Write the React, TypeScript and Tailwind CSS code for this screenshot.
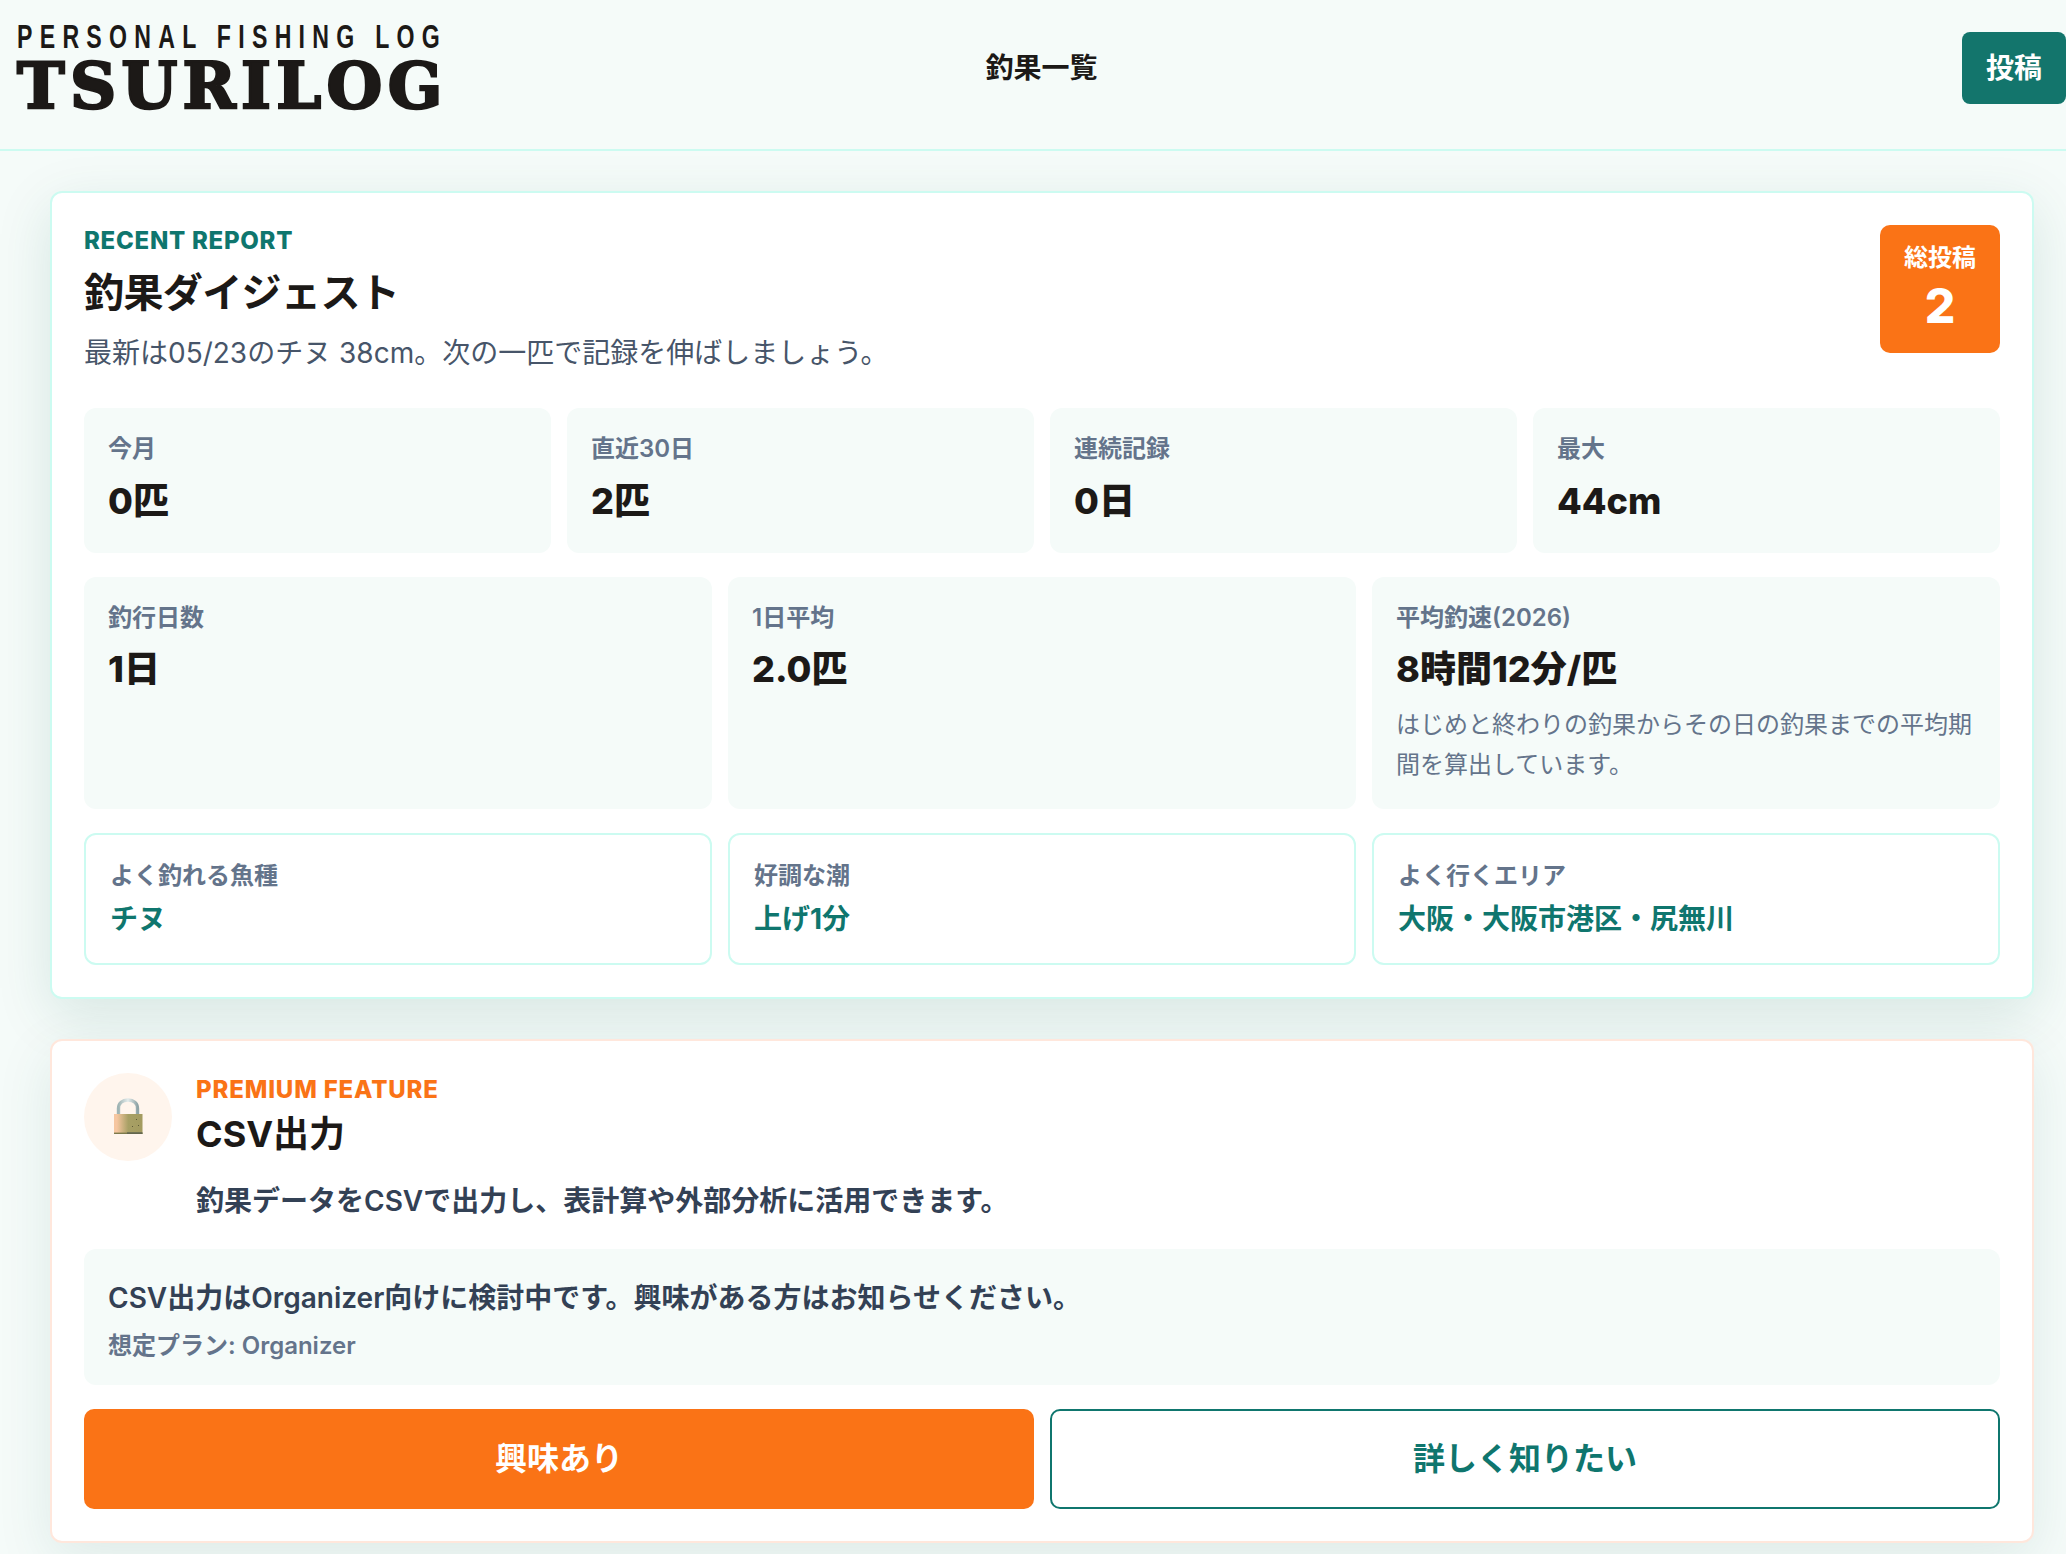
import React from 'react';

const sans = "font-['Inter','Noto_Sans_CJK_JP',sans-serif]";

function StatCard({ label, value, hint, tall }: { label: string; value: string; hint?: string; tall?: boolean }) {
    return (
        <div className={`rounded-[12px] bg-[#f5fbf9] px-6 pt-[25px] ${tall ? 'pb-[24px]' : 'pb-[30px]'}`}>
            <div className="text-[24px] leading-[32px] font-semibold text-[#64748b]">{label}</div>
            <div className={`${tall ? 'mt-[13px]' : 'mt-[14px]'} text-[36px] leading-[44px] font-extrabold text-[#1c1917]`}>{value}</div>
            {hint && <p className="mt-[14px] text-[24px] leading-[40px] text-[#64748b]">{hint}</p>}
        </div>
    );
}

function TrendCard({ label, value }: { label: string; value: string }) {
    return (
        <div className="rounded-[12px] border-2 border-[#ccfbf1] bg-white px-6 pt-[25px] pb-6">
            <div className="text-[24px] leading-[32px] font-semibold text-[#64748b]">{label}</div>
            <div className="mt-[7px] text-[28px] leading-[40px] font-bold text-[#0f766e]">{value}</div>
        </div>
    );
}

function LockIcon() {
    return (
        <svg width="32" height="40" viewBox="0 0 32 40" aria-hidden="true">
            <defs>
                <linearGradient id="lockBody" x1="0" y1="0" x2="1" y2="0">
                    <stop offset="0.1" stopColor="#f6c6a0" />
                    <stop offset="0.5" stopColor="#a8a065" />
                    <stop offset="1" stopColor="#a39b60" />
                </linearGradient>
                <linearGradient id="lockShackle" x1="0" y1="0" x2="1" y2="0">
                    <stop offset="0" stopColor="#9fb4b4" />
                    <stop offset="0.5" stopColor="#e4ecec" />
                    <stop offset="1" stopColor="#8ea3a6" />
                </linearGradient>
            </defs>
            <path d="M6.5 18 V11.5 C6.5 6 10.5 3 16 3 C21.5 3 25.5 6 25.5 11.5 V18" fill="none" stroke="url(#lockShackle)" strokeWidth="3.4" />
            <rect x="2" y="17" width="28.5" height="20" fill="url(#lockBody)" />
            <rect x="2" y="35.6" width="28.5" height="1.4" fill="#7d7a4c" />
            <rect x="15" y="35.6" width="15.5" height="0.8" fill="#3d4a52" />
            <rect x="24" y="22" width="1" height="1" fill="#5e5a38" />
            <rect x="20" y="29" width="1" height="1" fill="#5e5a38" />
            <rect x="26" y="28" width="1" height="1" fill="#5e5a38" />
        </svg>
    );
}

export default function App() {
    return (
        <div className={`${sans} min-h-[1554px] w-[2066px] overflow-hidden bg-[#f5fbf9] text-[#1c1917]`}>
            <header className="flex h-[151px] items-start border-b-2 border-[#ccfbf1] bg-[#f5fbf9] pl-[17px]">
                <div className="flex flex-1 justify-start">
                    <div className="w-[428px]">
                        <div className="mt-[24px] origin-left scale-x-[0.7] font-['Liberation_Sans',sans-serif] text-[33px] leading-[26px] font-bold tracking-[10.4px] whitespace-nowrap text-[#1c1917]">
                            PERSONAL FISHING LOG
                        </div>
                        <div className="mt-[8px] font-['DejaVu_Serif',serif] text-[64px] leading-[56px] font-bold tracking-[5.3px] whitespace-nowrap text-[#1c1917] [-webkit-text-stroke:2.5px_#1c1917]">
                            TSURILOG
                        </div>
                    </div>
                </div>
                <nav className="mt-[48px] text-[28px] leading-[40px] font-semibold">釣果一覧</nav>
                <div className="flex flex-1 justify-end">
                    <button className="mt-[32px] h-[72px] w-[104px] rounded-[8px] bg-[#13756c] text-[28px] font-bold text-white">投稿</button>
                </div>
            </header>

            <main className="pr-[32px] pl-[50px] pt-[40px]">
                <section className="rounded-[12px] border-2 border-[#ccfbf1] bg-white px-8 pt-8 pb-8 shadow-[0_16px_56px_rgba(15,90,75,0.13)]">
                    <div className="mb-[37px] flex items-start justify-between">
                        <div>
                            <div className="text-[24px] leading-[32px] font-extrabold tracking-[0.03em] text-[#0f766e]">RECENT REPORT</div>
                            <h1 className="mt-[10px] text-[40px] leading-[52px] font-bold tracking-[-0.6px]">釣果ダイジェスト</h1>
                            <p className="mt-[16px] text-[28px] leading-[36px] text-[#475569]">最新は05/23のチヌ 38cm。次の一匹で記録を伸ばしましょう。</p>
                        </div>
                        <div className="flex h-[128px] w-[120px] flex-col items-center rounded-[10px] bg-[#fa7316] pt-[17px] text-white">
                            <div className="text-[24px] leading-[32px] font-bold">総投稿</div>
                            <div className="mt-[2px] text-[48px] leading-[60px] font-extrabold">2</div>
                        </div>
                    </div>

                    <div className="grid grid-cols-4 gap-4">
                        <StatCard label="今月" value="0匹" />
                        <StatCard label="直近30日" value="2匹" />
                        <StatCard label="連続記録" value="0日" />
                        <StatCard label="最大" value="44cm" />
                    </div>

                    <div className="mt-6 grid grid-cols-3 gap-4">
                        <StatCard label="釣行日数" value="1日" tall />
                        <StatCard label="1日平均" value="2.0匹" tall />
                        <StatCard
                            label="平均釣速(2026)"
                            value="8時間12分/匹"
                            hint="はじめと終わりの釣果からその日の釣果までの平均期間を算出しています。"
                            tall
                        />
                    </div>

                    <div className="mt-6 grid grid-cols-3 gap-4">
                        <TrendCard label="よく釣れる魚種" value="チヌ" />
                        <TrendCard label="好調な潮" value="上げ1分" />
                        <TrendCard label="よく行くエリア" value="大阪・大阪市港区・尻無川" />
                    </div>
                </section>

                <section className="mt-[40px] rounded-[12px] border-2 border-[#ffe7dc] bg-white px-8 pt-8 pb-[32px] shadow-[0_16px_56px_rgba(15,90,75,0.1)]">
                    <div className="flex items-start gap-6">
                        <div className="flex h-[88px] w-[88px] shrink-0 items-center justify-center rounded-full bg-[#fff5ed]">
                            <LockIcon />
                        </div>
                        <div className="pt-px">
                            <div className="text-[24px] leading-[32px] font-extrabold tracking-[0.035em] text-[#fa7316]">PREMIUM FEATURE</div>
                            <h2 className="mt-[4px] text-[36px] leading-[48px] font-bold">CSV出力</h2>
                            <p className="mt-[23px] text-[28px] leading-[40px] font-semibold text-[#334155]">釣果データをCSVで出力し、表計算や外部分析に活用できます。</p>
                        </div>
                    </div>

                    <div className="mt-[28px] rounded-[12px] bg-[#f5fbf9] px-6 pt-[29px] pb-[23px]">
                        <p className="text-[28px] leading-[40px] font-semibold text-[#334155]">CSV出力はOrganizer向けに検討中です。興味がある方はお知らせください。</p>
                        <p className="mt-[12px] text-[24px] leading-[32px] font-semibold text-[#64748b]">想定プラン: Organizer</p>
                    </div>

                    <div className="mt-6 grid grid-cols-2 gap-4">
                        <button className="h-[100px] rounded-[10px] bg-[#fa7316] text-[32px] font-bold text-white">興味あり</button>
                        <button className="h-[100px] rounded-[10px] border-2 border-[#0f766e] bg-white text-[32px] font-bold text-[#0f766e]">詳しく知りたい</button>
                    </div>
                </section>
            </main>
        </div>
    );
}
